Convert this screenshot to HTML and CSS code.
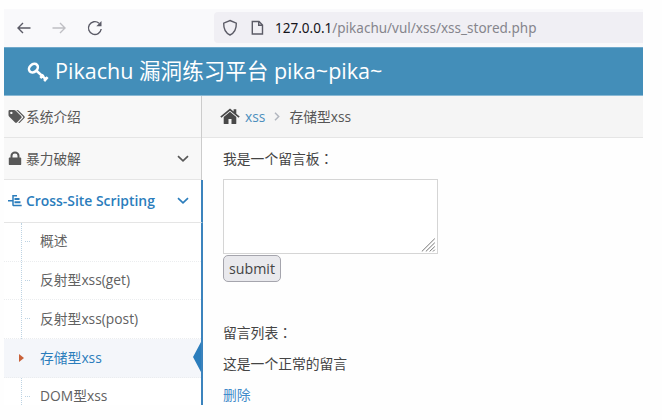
FILE: index.html
```html
<!DOCTYPE html>
<html lang="zh-CN">
<head>
<meta charset="utf-8">
<title>Pikachu</title>
<link rel="stylesheet" href="styles.css">
</head>
<body>
<div class="window">
  <div class="toolbar">
    <div class="nav-buttons">
      <svg width="14" height="12" viewBox="0 0 14 12" class="ico-nav"><path d="M13.5 6H1M6 1L1 6l5 5"/></svg>
      <svg width="14" height="12" viewBox="0 0 14 12" class="ico-nav disabled"><path d="M.5 6H13M8 1l5 5-5 5"/></svg>
      <svg width="16" height="16" viewBox="0 0 16 16" class="ico-nav"><path d="M12 3.2A6.4 6.4 0 1 0 14.2 9"/><path class="solid" d="M14.5 1v5.2H9.3z"/></svg>
    </div>
    <div class="address">
      <svg width="16" height="18" viewBox="0 0 16 18" class="ico-url"><path d="M8 1.5L14.3 4.2C14.5 10 12.5 13.8 8 16 3.5 13.8 1.5 10 1.7 4.2z"/></svg>
      <svg width="13" height="16" viewBox="0 0 13 16" class="ico-url page"><path d="M2.2 1.5H8L11.5 5v9H1.3V1.5zM7.7 1.5V5.3h3.8"/></svg>
      <span class="url"><b>127.0.0.1</b>/pikachu/vul/xss/xss_stored.php</span>
    </div>
  </div>
  <header class="header">
    <svg width="22" height="20" viewBox="0 0 22 20" class="ico-key"><ellipse cx="6.4" cy="6.2" rx="4.9" ry="3.8" transform="rotate(-42 6.4 6.2)"/><path d="M9.5 8.8L19 17.4M13.3 16l3.2-3.4M17.1 19l3.5-3.8"/></svg>
    <h1>Pikachu 漏洞练习平台 pika~pika~</h1>
  </header>
  <div class="body">
    <nav class="sidebar">
      <div class="item">
        <svg width="18" height="16" viewBox="0 0 18 16"><path fill="currentColor" fill-rule="evenodd" d="M.5 2.2Q.5 1 1.7 1H6q1 0 1.8.8l5.5 5.5q.9.9 0 1.8l-4.4 4.4q-.9.8-1.8 0L1.3 7.8Q.5 7 .5 6zM3.3 2.7a1.2 1.2 0 1 0 .1 0z"/><path fill="currentColor" d="M8.3 1h1q.8 0 1.5.7l5.6 5.6q.9.9 0 1.8l-4.6 4.6q-.7.6-1.5 0l4.6-4.7q.8-.8 0-1.6z"/></svg><span>系统介绍</span>
      </div>
      <div class="item">
        <svg width="18" height="16" viewBox="0 0 18 16"><path fill="currentColor" d="M1.7 6.5h10.6q.9 0 .9.9v5.8q0 .9-.9.9H1.7q-.9 0-.9-.9V7.4q0-.9.9-.9z"/><path fill="none" stroke="currentColor" stroke-width="2" d="M3.5 7V4.8a3.5 3.2 0 0 1 7 0V7"/></svg><span>暴力破解</span>
        <svg class="chevron" width="12" height="8" viewBox="0 0 12 8"><path d="M1 1.2l5 4.6 5-4.6"/></svg>
      </div>
      <div class="item open">
        <svg width="18" height="16" viewBox="0 0 18 16"><path fill="none" stroke="currentColor" stroke-width="1.5" d="M0 7.7h4.5M5 2v10.8M5 2.8h4M5 12.5h8.7"/><path fill="none" stroke="currentColor" stroke-width="2" d="M6.5 6h5M6.5 9.2h6"/></svg><span>Cross-Site Scripting</span>
        <svg class="chevron" width="12" height="8" viewBox="0 0 12 8"><path d="M1 1.2l5 4.6 5-4.6"/></svg>
      </div>
      <ul class="submenu">
        <li>概述</li>
        <li>反射型xss(get)</li>
        <li>反射型xss(post)</li>
        <li class="active">存储型xss</li>
        <li>DOM型xss</li>
      </ul>
    </nav>
    <main class="main">
      <div class="crumbs">
        <svg width="20" height="17" viewBox="0 0 20 17"><path fill="#484848" d="M10 3.8l6.3 5.3v6.3q0 .7-.7.7h-4.1v-5H8.5v5H4.4q-.7 0-.7-.7V9.1z"/><path fill="#484848" d="M10 .4l3.6 3V1.2h2.7v4.5L19.7 8.5l-1.1 1.3L10 2.7 1.4 9.8.3 8.5z"/></svg>
        <a>xss</a>
        <svg class="sep" width="6" height="9" viewBox="0 0 6 9"><path d="M1 .8l3.7 3.7L1 8.2"/></svg>
        <span>存储型xss</span>
      </div>
      <div class="content">
        <p class="prompt">我是一个留言板<span class="colon" lang="zh-TW">：</span></p>
        <div class="textarea"><svg width="15" height="14" viewBox="0 0 15 14"><path d="M.8 13.5L13.8.6M4.8 13.5l9-8.8M8.6 13.5l5.2-5M12 13.5l1.8-1.8"/></svg></div>
        <button class="submit">submit</button>
        <p class="list-title">留言列表<span class="colon" lang="zh-TW">：</span></p>
        <p class="message">这是一个正常的留言</p>
        <a class="delete">删除</a>
      </div>
    </main>
  </div>
</div>
</body>
</html>
```
FILE: styles.css
```css
* { box-sizing: border-box; }
body {
  margin: 0;
  background: #fefefe;
  font: 14px/20px "Open Sans", "Noto Sans CJK SC", sans-serif;
  color: #444;
}
svg { display: block; flex: none; }
p, h1, ul { margin: 0; padding: 0; }
.window { width: 639px; height: 396px; margin: 9px 0 0 4px; overflow: hidden; }

.toolbar { display: flex; height: 38px; background: #f9f9fb; }
.nav-buttons { display: flex; align-items: center; gap: 21px; width: 210px; padding-left: 13px; }
.ico-nav { fill: none; stroke: #5b5b66; stroke-width: 1.4; }
.ico-nav.disabled { stroke: #bfbfc4; }
.ico-nav .solid { fill: #5b5b66; stroke: none; }
.address {
  display: flex; flex: 1; align-items: center;
  height: 31px; margin-top: 3px; padding-left: 8px;
  background: #f0eff4; border-radius: 4px 0 0 4px;
}
.ico-url { fill: none; stroke: #5b5b66; stroke-width: 1.4; }
.ico-url.page { margin: 0 11px 0 13px; }
.url { font: 13.52px/20px "Noto Sans", sans-serif; color: #85858c; white-space: nowrap; }
.url b { font-weight: 400; color: #15141a; }

.header { display: flex; align-items: center; height: 49px; padding-left: 23px; background: #438eb9; border-top: 1px solid #70a9cb; border-bottom: 1px solid #8ab9d4; }
.ico-key { fill: none; stroke: #fff; stroke-width: 2.6; }
h1 { margin: -1px 0 0 6px; font-size: 21.55px; line-height: 30px; font-weight: 400; color: #fff; white-space: nowrap; }

.body { display: flex; height: 309px; }
.sidebar { width: 198px; background: #fff; border-right: 1px solid #ccc; flex: none; }
.item {
  display: flex; align-items: center; height: 42px; padding-left: 4px;
  background: #f8f8f8; border-bottom: 1px solid #e5e5e5; color: #585858; font-size: 13.7px;
  white-space: nowrap;
}
.chevron { margin: 0 12px 0 auto; fill: none; stroke: currentColor; stroke-width: 1.7; }
.item.open { height: 43px; background: #fff; color: #2b7dbc; font-weight: 600; font-size: 13.9px; }
.item.open, .submenu { width: 199px; border-right: 2px solid #3b83bd; }
.submenu { list-style: none; height: 182px; position: relative; }
.submenu::before { content: ""; position: absolute; left: 17px; top: 0; bottom: 0; border-left: 1px dotted #bdd3e3; }
.submenu li {
  position: relative; height: 38.7px; padding: 8px 0 0 36px;
  border-bottom: 1px dotted #ebedef; color: #616161; font-size: 13.8px; white-space: nowrap;
}
.submenu li:nth-child(3), .submenu .active { padding-top: 9px; }
.submenu li::before { content: ""; position: absolute; left: 21px; top: 18px; width: 5px; border-top: 1px dotted #bdd3e3; }
.submenu .active { background: #f4f6fa; color: #2b7dbc; }
.submenu .active::before { left: 15px; top: 15px; width: 0; border: solid transparent; border-width: 4px 0 4px 5px; border-left-color: #c86139; }
.submenu .active::after { content: ""; position: absolute; right: 0; top: 3px; border: solid transparent; border-width: 15px 8px 15px 0; border-right-color: #2b7dbc; }

.main { flex: 1; }
.crumbs { display: flex; align-items: center; height: 42px; padding-left: 18px; background: #f5f5f5; border-bottom: 1px solid #e5e5e5; color: #555; font-size: 13.8px; }
.crumbs a { margin-left: 5px; color: #4c8fbd; }
.crumbs .sep { margin: 0 9px; fill: none; stroke: #b2b6bf; stroke-width: 1.5; }
.content { padding: 10px 0 0 21px; font-size: 13.8px; }
.colon { font-family: "Noto Sans CJK TC", sans-serif; }
.prompt, .list-title { height: 20px; }
.textarea { display: flex; align-items: flex-end; justify-content: flex-end; width: 215px; height: 75px; margin-top: 11px; padding: 0 1px 1px 0; background: #fff; border: 1px solid #d5d5d5; }
.textarea svg { fill: none; stroke: #777; stroke-width: 1; }
.submit { display: block; width: 58px; height: 27px; margin-top: 1px; padding: 0; background: #e9e9ed; border: 1.5px solid #a5a5ad; border-radius: 5px; font: 14.2px/20px "Open Sans", sans-serif; color: #444; }
.list-title { margin-top: 40px; }
.message { margin-top: 12px; }
.delete { display: block; margin-top: 11px; color: #428bca; }
```
